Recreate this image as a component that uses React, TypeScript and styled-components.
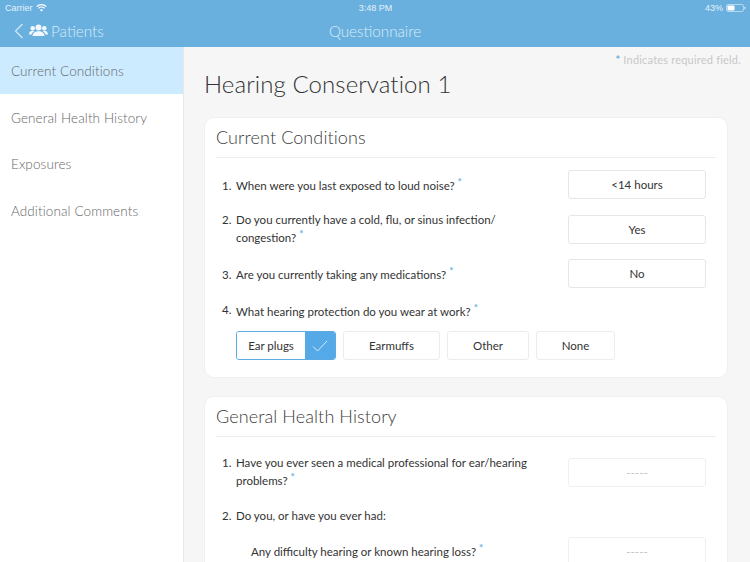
import React from "react";
import styled, { createGlobalStyle } from "styled-components";

const Global = createGlobalStyle`
  html, body { margin: 0; padding: 0; background: #f6f6f6; }
  #root { width: 750px; height: 562px; overflow: hidden; }
  * { box-sizing: border-box; }
`;
const Page = styled.div`
  width: 750px; height: 562px; display: flex; flex-direction: column; overflow: hidden;
  font-family: "Lato", "Liberation Sans", sans-serif; background: #f6f6f6;
`;
const Header = styled.header`
  height: 47px; flex: none; background: #6ab0df; color: #fff; display: flex; flex-direction: column;
`;
const StatusBar = styled.div`
  height: 15px; display: grid; grid-template-columns: 1fr auto 1fr; align-items: center;
  padding: 1px 4px 0 5px; font: 9px "Liberation Sans", sans-serif; color: #e4f1fa;
`;
const StatusSide = styled.div`
  display: flex; align-items: center; gap: 3px;
`;
const StatusRight = styled(StatusSide)`
  justify-content: flex-end;
`;
const NavBar = styled.div`
  height: 32px; display: grid; grid-template-columns: 1fr auto 1fr; align-items: center; padding: 0 14px 1px;
`;
const BackLink = styled.div`
  display: flex; align-items: center; font-size: 15.3px; font-weight: 300; color: #d8ebf8;
`;
const Chevron = styled.svg`
  margin-right: 5px;
`;
const People = styled.svg`
  margin-right: 3px;
`;
const NavTitle = styled.div`
  font-size: 15.2px; font-weight: 300; color: #d8ebf8;
`;
const Body = styled.div`
  flex: 1; display: flex; min-height: 0;
`;
const Sidebar = styled.nav`
  width: 184px; flex: none; background: #fff; border-right: 1px solid #e8e8e8;
`;
const NavItem = styled.div<{ $active?: boolean }>`
  height: 46.7px; display: flex; align-items: center; padding: 1px 0 0 11px; font-size: 13.5px; font-weight: 300;
  color: #666; letter-spacing: 0.1px; background: ${(p) => (p.$active ? "#cdebff" : "#fff")};
`;
const Main = styled.main`
  flex: 1; padding: 0 22px 0 20px; overflow: hidden;
`;
const Required = styled.div`
  height: 24px; padding: 6px 0 0; margin-right: -13px; text-align: right; font-size: 11px; line-height: 13px;
  color: #c8c8c8; letter-spacing: 0.2px;
`;
const Star = styled.span`
  color: #6ab0df; font-weight: 700;
`;
const Title = styled.h1`
  margin: 0; height: 46px; line-height: 26px; font-size: 24px; font-weight: 300; color: #333; letter-spacing: 0.1px;
`;
const Card = styled.section`
  background: #fff; border-radius: 10px; border: 1px solid #f0f0f0; padding: 0 11px; margin-bottom: 18px;
`;
const CardTitle = styled.h2`
  margin: 0; height: 40px; padding-top: 7px; line-height: 24px; font-size: 18px; font-weight: 300; color: #404040;
  border-bottom: 1px solid #ececec; letter-spacing: 0.1px;
`;
const Rows = styled.div<{ $top: number }>`
  padding-top: ${(p) => p.$top}px;
`;
const Row = styled.div<{ $h: number }>`
  height: ${(p) => p.$h}px; display: flex; justify-content: space-between; align-items: flex-start; padding-left: 6px;
`;
const Question = styled.div<{ $indent?: boolean; $shift?: number }>`
  display: flex; width: 310px; font-size: 11.5px; line-height: 18px; color: #333;
  padding-left: ${(p) => (p.$indent ? "29px" : "0")}; margin-top: ${(p) => p.$shift ?? 0}px;
`;
const Num = styled.span<{ $raised?: boolean }>`
  width: 14px; flex: none; margin-top: ${(p) => (p.$raised ? "-2px" : "0")};
`;
const Sup = styled.sup`
  color: #6ab0df; font-size: 10px; font-weight: 700; line-height: 0; margin-left: 3px;
`;
const Answer = styled.div<{ $empty?: boolean }>`
  width: 138px; height: 29px; margin-right: 10px; flex: none; display: flex; align-items: center; justify-content: center;
  border: 1px solid ${(p) => (p.$empty ? "#f0f0f0" : "#e6e6e6")}; border-radius: 3px; background: #fff; font-size: 11.5px;
  color: ${(p) => (p.$empty ? "#c4c4c4" : "#333")};
`;
const Options = styled.div`
  display: flex; gap: 7px; padding: 0 0 17px 20px;
`;
const Option = styled.div<{ $w: number }>`
  width: ${(p) => p.$w}px; height: 29px; display: flex; align-items: center; justify-content: center;
  border: 1px solid #ececec; border-radius: 3px; font-size: 11.5px; color: #333;
`;
const Selected = styled.div`
  width: 100px; height: 29px; display: flex; border: 1px solid #5aaae3; border-radius: 3px; overflow: hidden; font-size: 11.5px; color: #333;
`;
const SelectedLabel = styled.div`
  flex: 1; display: flex; align-items: center; justify-content: center; background: #fff;
`;
const Check = styled.div`
  width: 30px; display: flex; align-items: center; justify-content: center; background: #55a9e6;
`;

const Req = () => <Sup>*</Sup>;

export default function App() {
  return (
    <Page>
      <Global />
      <Header>
        <StatusBar>
          <StatusSide>
            Carrier
            <svg width="11" height="8" viewBox="0 0 11 8" fill="none" stroke="#fff" strokeWidth="1.2">
              <path d="M.7 2.7a6.8 6.8 0 0 1 9.6 0M2.4 4.4a4.4 4.4 0 0 1 6.2 0" />
              <path d="M5.5 7.6 3.9 6a2.3 2.3 0 0 1 3.2 0z" fill="#fff" stroke="none" />
            </svg>
          </StatusSide>
          <span>3:48 PM</span>
          <StatusRight>
            43%
            <svg width="20" height="8" viewBox="0 0 20 8">
              <rect x=".5" y=".5" width="17" height="7" rx="1.6" fill="none" stroke="#d8ebf8" strokeWidth=".7" />
              <rect x="1.5" y="1.5" width="7" height="5" rx=".8" fill="#fff" />
              <rect x="18.3" y="2.7" width="1" height="2.6" rx=".5" fill="#d8ebf8" />
            </svg>
          </StatusRight>
        </StatusBar>
        <NavBar>
          <BackLink>
            <Chevron width="10" height="16" viewBox="0 0 10 16" fill="none" stroke="#d8ebf8" strokeWidth="1.1">
              <path d="M8.5 1 1.500 8l7 7" />
            </Chevron>
            <People width="19" height="13" viewBox="0 0 19 13" fill="#f2f8fc">
              <circle cx="9.500" cy="3.600" r="3" />
              <path d="M3.600 12c0-3.300 2.400-4.800 5.900-4.800s5.900 1.500 5.900 4.800z" />
              <circle cx="3.700" cy="4.300" r="2.200" />
              <circle cx="15.300" cy="4.300" r="2.200" />
              <path d="M0 10.500c0-2.300 1.300-3.700 3.600-3.700.7 0 1.200.1 1.700.4-1.500.8-2.500 2-2.700 3.300zM19 10.500c0-2.300-1.300-3.700-3.600-3.700-.7 0-1.200.1-1.700.4 1.500.8 2.500 2 2.700 3.300z" />
            </People>
            Patients
          </BackLink>
          <NavTitle>Questionnaire</NavTitle>
          <div />
        </NavBar>
      </Header>
      <Body>
        <Sidebar>
          <NavItem $active>Current Conditions</NavItem>
          <NavItem>General Health History</NavItem>
          <NavItem>Exposures</NavItem>
          <NavItem>Additional Comments</NavItem>
        </Sidebar>
        <Main>
          <Required><Star>*</Star> Indicates required field.</Required>
          <Title>Hearing Conservation 1</Title>
          <Card>
            <CardTitle>Current Conditions</CardTitle>
            <Rows $top={12}>
              <Row $h={45}>
                <Question $shift={7}><Num>1.</Num><span>When were you last exposed to loud noise?<Req /></span></Question>
                <Answer>&lt;14 hours</Answer>
              </Row>
              <Row $h={44}>
                <Question $shift={-4}><Num>2.</Num><span>Do you currently have a cold, flu, or sinus infection/<br />congestion?<Req /></span></Question>
                <Answer>Yes</Answer>
              </Row>
              <Row $h={43}>
                <Question $shift={7}><Num>3.</Num><span>Are you currently taking any medications?<Req /></span></Question>
                <Answer>No</Answer>
              </Row>
              <Row $h={29}>
                <Question $shift={1}><Num $raised>4.</Num><span>What hearing protection do you wear at work?<Req /></span></Question>
              </Row>
            </Rows>
            <Options>
              <Selected>
                <SelectedLabel>Ear plugs</SelectedLabel>
                <Check>
                  <svg width="16" height="12" viewBox="0 0 16 12" fill="none" stroke="#d5ecfb" strokeWidth="1">
                    <path d="m1 6.500 4.500 4.500L15 1" />
                  </svg>
                </Check>
              </Selected>
              <Option $w={97}>Earmuffs</Option>
              <Option $w={82}>Other</Option>
              <Option $w={79}>None</Option>
            </Options>
          </Card>
          <Card>
            <CardTitle>General Health History</CardTitle>
            <Rows $top={21}>
              <Row $h={49}>
                <Question $shift={-4}><Num>1.</Num><span>Have you ever seen a medical professional for ear/hearing<br />problems?<Req /></span></Question>
                <Answer $empty>-----</Answer>
              </Row>
              <Row $h={30}>
                <Question><Num>2.</Num><span>Do you, or have you ever had:</span></Question>
              </Row>
              <Row $h={40}>
                <Question $indent $shift={6}><span>Any difficulty hearing or known hearing loss?<Req /></span></Question>
                <Answer $empty>-----</Answer>
              </Row>
            </Rows>
          </Card>
        </Main>
      </Body>
    </Page>
  );
}
